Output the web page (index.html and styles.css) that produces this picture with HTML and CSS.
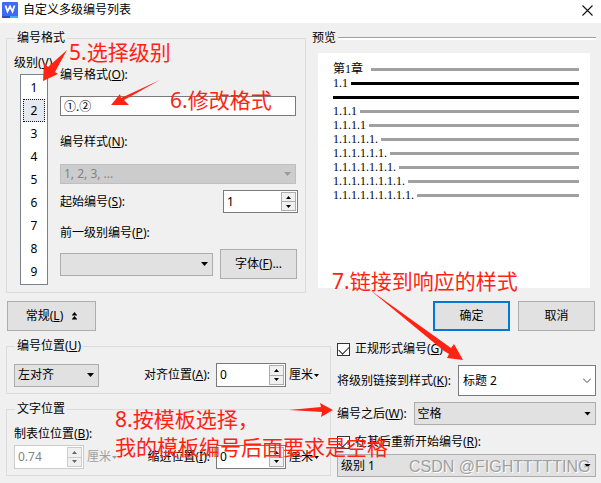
FILE: index.html
```html
<!DOCTYPE html>
<html lang="zh-CN">
<head>
<meta charset="utf-8">
<title>自定义多级编号列表</title>
<link rel="stylesheet" href="styles.css">
</head>
<body>
<svg class="defs" aria-hidden="true">
  <symbol id="up" viewBox="0 0 5 3"><path d="M0 3 2.5 0 5 3z"/></symbol>
  <symbol id="down" viewBox="0 0 5 3"><path d="M0 0h5L2.5 3z"/></symbol>
</svg>
<div class="dialog">
  <header class="titlebar">
    <svg class="logo" viewBox="0 0 16 16" aria-hidden="true">
      <rect width="16" height="16" rx="1" fill="#3c6cf5"/>
      <path d="M0 14h8v2H1q-1 0-1-1z" fill="#2352c8"/><path d="M8 14h8v1q0 1-1 1H8z" fill="#3faeff"/>
      <path d="M3.5 3.5 5.5 9.5 8 4.500 10.500 9.500 12.500 3.500" fill="none" stroke="#fff" stroke-width="1.8"/>
    </svg>
    <h1 class="title">自定义多级编号列表</h1>
    <button class="close" aria-label="关闭"><svg viewBox="0 0 11 11"><path d="M.5.5l10 10M10.500.5l-10 10" fill="none" stroke="#111" stroke-width="1.1"/></svg></button>
  </header>

  <main class="content">
    <div class="upper">
      <fieldset class="group format">
        <legend>编号格式</legend>
        <div class="levels">
          <span class="label" id="levels-label">级别(<u>V</u>)</span>
          <ul class="level-list" aria-labelledby="levels-label">
            <li><button>1</button></li>
            <li><button class="selected">2</button></li>
            <li><button>3</button></li>
            <li><button>4</button></li>
            <li><button>5</button></li>
            <li><button>6</button></li>
            <li><button>7</button></li>
            <li><button>8</button></li>
            <li><button>9</button></li>
          </ul>
        </div>
        <div class="fields">
          <label class="label" for="fmt">编号格式(<u>O</u>):</label>
          <input class="text" id="fmt" value="①.②">
          <label class="label" for="style">编号样式(<u>N</u>):</label>
          <span class="select off short"><select id="style" disabled><option>1, 2, 3, ...</option></select></span>
          <div class="row start">
            <label class="label" for="start">起始编号(<u>S</u>):</label>
            <span class="spin wide"><input id="start" value="1"><span class="steps"><button aria-label="增加"><svg><use href="#up"/></svg></button><button aria-label="减少"><svg><use href="#down"/></svg></button></span></span>
          </div>
          <label class="label" for="prev">前一级别编号(<u>P</u>):</label>
          <div class="row font-row">
            <span class="select grow"><select id="prev"><option></option></select></span>
            <button class="button">字体(<u>F</u>)...</button>
          </div>
        </div>
      </fieldset>

      <section class="preview">
        <h2 class="preview-title">预览</h2>
        <div class="paper">
          <p class="line first">第1章</p>
          <p class="line current">1.1</p>
          <p class="line current blank"></p>
          <p class="line">1.1.1</p>
          <p class="line">1.1.1.1</p>
          <p class="line">1.1.1.1.1.</p>
          <p class="line">1.1.1.1.1.1.</p>
          <p class="line">1.1.1.1.1.1.1.</p>
          <p class="line">1.1.1.1.1.1.1.1.</p>
          <p class="line">1.1.1.1.1.1.1.1.1.</p>
        </div>
      </section>
    </div>

    <div class="actions">
      <button class="button more"><span>常规(<u>L</u>)</span><svg viewBox="0 0 5 8" aria-hidden="true"><path d="M0 3 2.500 0 5 3zM0 7 2.500 4 5 7zM0 3h5v.6H0zM0 7h5v.6H0z"/></svg></button>
      <button class="button primary">确定</button>
      <button class="button">取消</button>
    </div>

    <div class="lower">
      <div class="positions">
        <fieldset class="group">
          <legend>编号位置(<u>U</u>)</legend>
          <div class="row position">
            <span class="select align"><select aria-label="编号位置"><option>左对齐</option></select></span>
            <label class="label push" for="at">对齐位置(<u>A</u>):</label>
            <span class="spin"><input id="at" value="0"><span class="steps"><button aria-label="增加"><svg><use href="#up"/></svg></button><button aria-label="减少"><svg><use href="#down"/></svg></button></span></span>
            <button class="unit">厘米<svg><use href="#down"/></svg></button>
          </div>
        </fieldset>
        <fieldset class="group">
          <legend>文字位置</legend>
          <label class="label" for="tab">制表位位置(<u>B</u>):</label>
          <div class="row position">
            <span class="spin off"><input id="tab" value="0.74" disabled><span class="steps"><button disabled aria-label="增加"><svg><use href="#up"/></svg></button><button disabled aria-label="减少"><svg><use href="#down"/></svg></button></span></span>
            <button class="unit" disabled>厘米<svg><use href="#down"/></svg></button>
            <label class="label push" for="indent">缩进位置(<u>I</u>):</label>
            <span class="spin"><input id="indent" value="0"><span class="steps"><button aria-label="增加"><svg><use href="#up"/></svg></button><button aria-label="减少"><svg><use href="#down"/></svg></button></span></span>
            <button class="unit">厘米<svg><use href="#down"/></svg></button>
          </div>
        </fieldset>
      </div>

      <div class="options">
        <label class="check"><input type="checkbox" checked><span>正规形式编号(<u>G</u>)</span></label>
        <div class="row link-row">
          <label class="label" for="link">将级别链接到样式(<u>K</u>):</label>
          <span class="select combo grow"><select id="link"><option>标题 2</option></select><svg viewBox="0 0 8 5" aria-hidden="true"><path d="M0 .5 4 4.500 8 .5" fill="none" stroke="#444"/></svg></span>
        </div>
        <div class="row after-row">
          <label class="label" for="after">编号之后(<u>W</u>):</label>
          <span class="select grow"><select id="after"><option>空格</option></select></span>
        </div>
        <label class="check"><input type="checkbox" checked><span>在其后重新开始编号(<u>R</u>):</span></label>
        <span class="select"><select aria-label="重新开始编号的级别"><option>级别 1</option></select></span>
      </div>
    </div>
  </main>

  <div class="notes">
    <svg class="arrows" viewBox="0 0 601 483" aria-hidden="true">
      <path d="M67 50 55 72 58 74 43 81 44 63 48 67z"/>
      <path d="M160 80 124 100 129 105 111 105 120 94 121 98z"/>
      <path d="M370 290 451 348 454 344 463 360 447 358 449 354 444 351z"/>
      <path d="M289 410 321 407 320 403 333 410 321 417 322 412z"/>
    </svg>
    <p class="note n5">5.选择级别</p>
    <p class="note n6">6.修改格式</p>
    <p class="note n7">7.链接到响应的样式</p>
    <p class="note n8">8.按模板选择，<br>我的模板编号后面要求是空格</p>
    <p class="watermark">CSDN @FIGHTTTTTING</p>
  </div>
</div>
</body>
</html>
```
FILE: styles.css
```css
* { box-sizing: border-box; }

body {
  margin: 0;
  background: #f0f0f0;
  color: #000;
  font: 12px/16px "Noto Sans", "Noto Sans CJK SC", sans-serif;
}

h1, h2, p, ul { margin: 0; padding: 0; font-size: inherit; font-weight: normal; }
ul { list-style: none; }
button, input, select { font: inherit; color: inherit; margin: 0; border-radius: 0; }
button { padding: 0; border: 0; background: none; }
svg { display: block; }
u { text-underline-offset: 1px; }
.defs { display: none; }

.dialog { position: relative; min-height: 100vh; }

.titlebar {
  display: flex;
  align-items: center;
  height: 23px;
  padding: 0 8px 3px 2px;
  background: #fff;
}
.logo { width: 16px; height: 16px; }
.title { flex: 1; margin-left: 5px; }
.close svg { width: 11px; height: 11px; }

.content { padding: 7px 5px 6px 6px; }
.row { display: flex; align-items: center; }
.grow { flex: 1; }
.label { display: block; white-space: nowrap; }

.group {
  min-width: 0;
  margin: 0;
  padding: 9px 7px 6px;
  border: 1px solid #dcdcdc;
}
.group legend { margin-left: 1px; padding: 0 2px; }

.upper { display: grid; grid-template-columns: 300fr 284fr; gap: 6px; }
.format { display: flex; padding-bottom: 7px; }

.levels { width: 46px; }
.level-list {
  width: 28px;
  margin: 3px 0 0 6px;
  padding: 1px 2px;
  border: 1px solid #7a828c;
  background: #fff;
}
.level-list button { display: block; width: 100%; height: 23px; border: 1px solid transparent; }
.level-list .selected { border: 1px dotted #111; background: #e5e9f2; }

.fields { flex: 1; padding-top: 12px; }
.text {
  display: block;
  width: calc(100% - 2px);
  height: 20px;
  margin: 13px 0 18px;
  padding: 0 3px;
  border: 1px solid #7a7a7a;
  background: #fff;
}
.fields .short { height: 20px; margin: 14px 2px 6px 0; }
.start { justify-content: space-between; margin-bottom: 12px; }
.font-row { gap: 7px; margin: 8px 1px 0 0; }

.select { position: relative; display: block; height: 23px; }
.select select {
  display: block;
  width: 100%;
  height: 100%;
  padding: 0 20px 0 3px;
  border: 1px solid #adadad;
  background: #e1e1e1;
  appearance: none;
}
.select::after {
  content: "";
  position: absolute;
  top: calc(50% - 2px);
  right: 5px;
  width: 7px;
  height: 4px;
  background: #000;
  clip-path: polygon(0 0, 100% 0, 50% 100%);
}
.off select { border-color: #bfbfbf; background: #ccc; color: #838383; opacity: 1; }
.select.off::after { background: #9b9b9b; }
.combo { height: 31px; }
.combo select { padding-left: 4px; border-color: #7a7a7a; background: #fff; }
.combo::after { display: none; }
.combo svg { position: absolute; right: 5px; top: 13px; width: 8px; height: 5px; }

.spin {
  display: flex;
  width: 70px;
  height: 24px;
  padding: 1px;
  border: 1px solid #7a7a7a;
  background: #fff;
}
.spin.wide { width: 75px; height: 23px; }
.spin input { flex: 1; min-width: 0; padding: 0 2px; border: 0; background: none; }
.steps { display: flex; flex-direction: column; width: 15px; }
.steps button {
  display: flex;
  flex: 1;
  align-items: center;
  justify-content: center;
  border: 1px solid #adadad;
  background: #f0f0f0;
}
.steps button + button { border-top: 0; }
.steps svg, .unit svg { width: 5px; height: 3px; }
.spin.off { border-color: #ccc; color: #838383; }
.spin.off button { border-color: #ccc; color: #555; }
.spin.off svg { fill: #666; }

.button {
  min-width: 77px;
  height: 30px;
  border: 1px solid #adadad;
  background: #e1e1e1;
}
.primary { border: 2px solid #0078d7; }

.actions { display: flex; gap: 8px; margin: 8px 1px 7px; }
.more { display: flex; align-items: center; justify-content: center; gap: 9px; width: 89px; margin-right: auto; }
.more svg { width: 5px; height: 8px; }

.lower { display: grid; grid-template-columns: 325fr 259fr; gap: 6px; }
.positions { display: flex; flex-direction: column; gap: 7px; }
.position { height: 24px; }
.position .align { width: 85px; }
.label + .position { margin-top: 3px; }
.push { margin: 0 6px 0 auto; }
.unit { display: flex; align-items: center; gap: 1px; margin: 0 4px 0 3px; white-space: nowrap; }
.unit:disabled { color: #a0a0a0; }
.unit:disabled svg { fill: #a0a0a0; }

.options { padding-top: 3px; }
.check { display: flex; align-items: center; height: 16px; white-space: nowrap; }
.check input {
  width: 13px;
  height: 13px;
  margin-right: 5px;
  border: 1px solid #333;
  background: #fff;
  appearance: none;
}
.check input:checked::after {
  content: "";
  display: block;
  width: 9px;
  height: 5px;
  margin: 2px 1px;
  border: solid #222;
  border-width: 0 0 1px 1px;
  transform: rotate(-45deg);
}
.link-row { gap: 7px; margin: 8px 0 6px; }
.after-row { gap: 7px; margin-bottom: 9px; }
.options .check + .select { margin-top: 4px; }

.preview { display: flex; flex-direction: column; }
.preview-title { display: flex; align-items: center; gap: 2px; }
.preview-title::after {
  content: "";
  flex: 1;
  height: 2px;
  border-top: 1px solid #a0a0a0;
  background: #fff;
}
.paper {
  flex: 1;
  margin: 7px 6px 5px;
  padding: 9px 11px 9px 15px;
  background: #fff;
  font: 12px/14px "Liberation Serif", "Noto Sans CJK SC", serif;
}
.line { display: flex; align-items: center; gap: 3px; height: 14px; }
.line::after { content: ""; flex: 1; height: 3px; margin-top: 1px; background: #a0a0a0; }
.line.blank { gap: 0; }
.first { gap: 8px; }
.line.current::after { background: #000; }

.notes { position: absolute; top: 0; left: 0; width: 601px; pointer-events: none; }
.arrows { width: 100%; fill: #ff2314; }
.note {
  position: absolute;
  color: #ff2314;
  font-size: 21px;
  line-height: 28px;
  white-space: nowrap;
}
.n5 { left: 69px; top: 38px; }
.n6 { left: 170px; top: 86px; }
.n7 { left: 332px; top: 267px; }
.n8 { left: 115px; top: 405px; }
.watermark {
  position: absolute;
  left: 409px;
  top: 457px;
  color: #a0a0a0;
  font-family: "Liberation Sans", sans-serif;
  font-size: 16px;
  line-height: 20px;
  text-shadow: 1px 1px #fff;
  white-space: nowrap;
}
```
